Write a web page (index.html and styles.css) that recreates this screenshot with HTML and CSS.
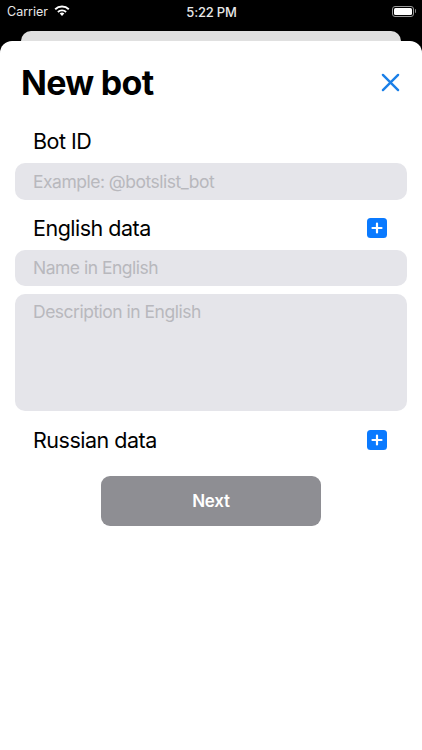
FILE: index.html
```html
<!DOCTYPE html>
<html lang="en">
<head>
<meta charset="utf-8">
<title>New bot</title>
<link rel="stylesheet" href="styles.css">
</head>
<body>
<div class="screen">
  <div class="status">
    <div class="status-left">
      <span>Carrier</span>
      <svg class="wifi" viewBox="0 0 16 12" width="16" height="12"><path d="M1.200 4.300A9.800 9.800 0 0 1 14.800 4.300" stroke="#fff" stroke-width="1.900" fill="none"/><path d="M3.900 7A6 6 0 0 1 12.100 7" stroke="#fff" stroke-width="1.900" fill="none"/><path d="M8 7.600c-.9 0-1.700.3-2.300.9L8 11l2.300-2.500c-.6-.6-1.400-.9-2.300-.9z" fill="#fff"/></svg>
    </div>
    <span class="time">5:22 PM</span>
    <div class="battery"><div class="battery-body"><div class="battery-fill"></div></div><div class="battery-cap"></div></div>
  </div>
  <div class="back-card"></div>
  <main class="sheet">
    <header class="head">
      <h1>New bot</h1>
      <svg class="close" viewBox="0 0 20 20" width="20" height="20"><path d="M2 2l16 16M18 2L2 18" stroke="#1a7fe8" stroke-width="2.500" stroke-linecap="round" fill="none"/></svg>
    </header>
    <section class="form">
      <div class="label-row first"><span>Bot ID</span></div>
      <div class="field short"><span>Example: @botslist_bot</span></div>
      <div class="label-row second">
        <span>English data</span>
        <span class="plus"><svg viewBox="0 0 20 20" width="20" height="20"><path d="M10 5.500v9M5.500 10h9" stroke="#fff" stroke-width="2.200" stroke-linecap="round"/></svg></span>
      </div>
      <div class="field short"><span>Name in English</span></div>
      <div class="field tall"><span>Description in English</span></div>
      <div class="label-row third">
        <span>Russian data</span>
        <span class="plus"><svg viewBox="0 0 20 20" width="20" height="20"><path d="M10 5.500v9M5.500 10h9" stroke="#fff" stroke-width="2.200" stroke-linecap="round"/></svg></span>
      </div>
      <button class="next">Next</button>
    </section>
  </main>
</div>
</body>
</html>
```
FILE: styles.css
```css
* { box-sizing: border-box; }
html, body { margin: 0; height: 100%; }
body { font-family: Inter, "Liberation Sans", sans-serif; background: #000; overflow: hidden; }
.screen { width: 422px; height: 750px; display: flex; flex-direction: column; background: #000; }
.status { height: 22px; flex: none; padding: 1px 6px 0 7px; color: #e8e8e8; font-size: 12.500px; display: grid; grid-template-columns: 1fr auto 1fr; align-items: center; }
.status-left { display: flex; align-items: center; gap: 6px; }
.wifi { display: block; margin-top: -2px; }
.time { font-weight: 500; font-size: 13px; letter-spacing: -0.2px; }
.battery { justify-self: end; display: flex; align-items: center; gap: 1px; margin-top: -1px; }
.battery-body { width: 22px; height: 11px; border: 1px solid #999; border-radius: 3px; padding: 1px; }
.battery-fill { height: 100%; background: #fff; border-radius: 1.500px; }
.battery-cap { width: 1.500px; height: 4px; background: #888; border-radius: 0 1px 1px 0; }
.back-card { height: 10px; flex: none; margin: 9px 21px 0; background: #e0e0e0; border-radius: 10px 10px 0 0; }
.sheet { flex: 1; background: #fff; border-radius: 12px 12px 0 0; padding: 0 15px; }
.head { display: flex; justify-content: space-between; align-items: center; height: 82px; padding: 0 7px 0 6px; }
h1 { margin: 0; font-size: 34px; font-weight: 700; color: #000; letter-spacing: -0.7px; }
.close { width: 19px; height: 19px; }
.form { display: flex; flex-direction: column; }
.label-row { display: flex; justify-content: space-between; align-items: center; height: 40px; padding: 0 20px 0 18px; font-size: 21.500px; letter-spacing: -0.5px; color: #000; }
.label-row.first { height: 36px; margin-bottom: 4px; }
.label-row.third { margin-top: 9px; }
.plus { width: 20px; height: 20px; background: #0a7aff; border-radius: 3.500px; display: block; }
.plus svg { display: block; }
.field { background: #e5e5ea; border-radius: 10px; padding: 0 18px; color: #b8b8bd; font-size: 17.500px; letter-spacing: -0.5px; }
.short { height: 36.500px; display: flex; align-items: center; }
.second { margin-top: 8.500px; margin-bottom: 1.500px; }
.tall { height: 117.500px; margin-top: 7.500px; padding-top: 7px; }
.next { align-self: center; margin-top: 16px; width: 220px; height: 49.500px; background: #8e8e93; color: #fff; border: 0; border-radius: 9px; font: 600 17px Inter, "Liberation Sans", sans-serif; letter-spacing: -0.2px; }
```
